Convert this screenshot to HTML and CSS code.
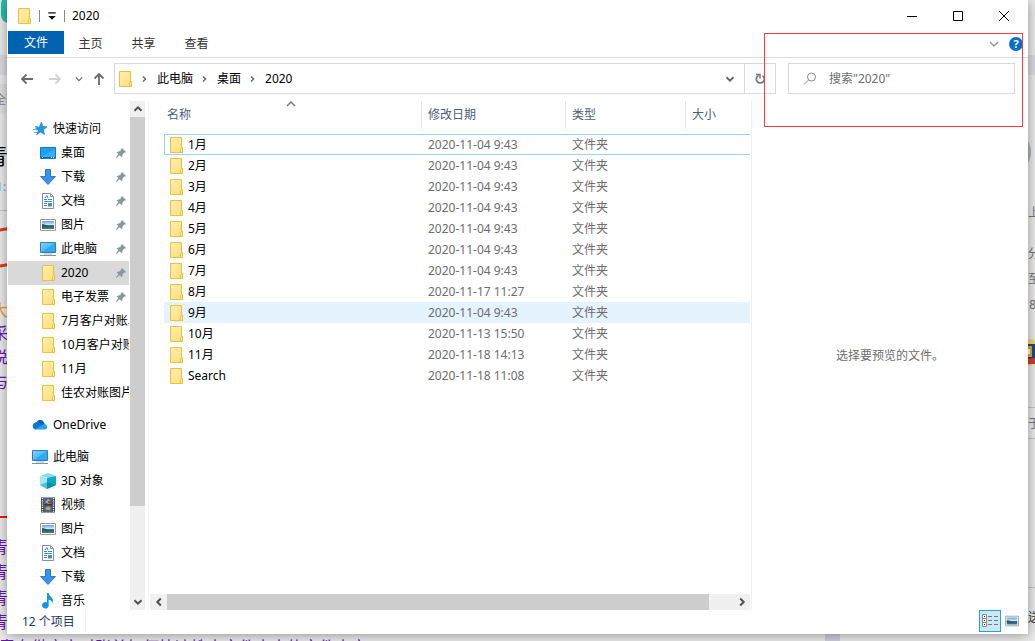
FILE: index.html
```html
<!DOCTYPE html>
<html lang="zh-CN">
<head>
<meta charset="utf-8">
<title>2020</title>
<link rel="stylesheet" href="styles.css">
</head>
<body>
<svg class="defs" aria-hidden="true">
  <defs>
    <linearGradient id="gFolder" x1="0" y1="0" x2="1" y2="1"><stop offset="0" stop-color="#ffeeb0"/><stop offset="1" stop-color="#ffdf7c"/></linearGradient>
    <linearGradient id="gScreen" x1="0" y1="0" x2="1" y2="1"><stop offset="0" stop-color="#7fd0ff"/><stop offset=".5" stop-color="#4dbcff"/><stop offset=".5" stop-color="#2ea9f8"/><stop offset="1" stop-color="#2ea9f8"/></linearGradient>
    <linearGradient id="gSky" x1="0" y1="0" x2="0" y2="1"><stop offset="0" stop-color="#5fa3e6"/><stop offset=".5" stop-color="#dceefa"/><stop offset=".55" stop-color="#44706f"/><stop offset="1" stop-color="#3c6f94"/></linearGradient>
  </defs>
  <symbol id="folder" viewBox="0 0 16 16"><path d="M2.500.5h11v10h1v5h-12z" fill="url(#gFolder)" stroke="#e8c240"/><path d="M12.500 15.500v-4l1-1h1v5z" fill="#ffe58f" stroke="#e8c240"/></symbol>
  <symbol id="star" viewBox="0 0 16 16"><path d="M9.500 1l1.200 4.500 4.300.3-3.500 3 1 4.700-3.800-2.600L5 13.500l1.200-4.300L3.500 7l4-1.300z" fill="#2598e4" stroke="#1c83cf" stroke-width=".7"/><path d="M3 5.500h3M1 8.500h4M2 11.500h3M4 14l2-1" stroke="#55b5f0" fill="none"/></symbol>
  <symbol id="desktop" viewBox="0 0 16 16"><path d="M.5 2.500h15v11H.5z" fill="#1a9fff" stroke="#1478bd"/><path d="M1 12L15 4v8z" fill="#38adff"/><path d="M1 12.500h14" stroke="#126aaa"/><path d="M2 12.500h1M11 12.500h1M13 12.500h1" stroke="#fff"/></symbol>
  <symbol id="down" viewBox="0 0 16 16"><path d="M5.500.5h5v7h5L8 15.500.5 7.500h5z" fill="#3a94e6" stroke="#2f78c2"/></symbol>
  <symbol id="doc" viewBox="0 0 16 16"><path d="M2.500.5h8l3 3v12h-11z" fill="#fff" stroke="#8a9096"/><path d="M10.500.5v3h3" fill="none" stroke="#8a9096"/><path d="M5 5l2-2.500L8 5M4 6.500h3M8 6.500h4M4 8.500h8M4 10.500h3M4 12.500h3" stroke="#2793dc" fill="none"/><path d="M8 10h4v3.500H8z" fill="#5a8d9e"/></symbol>
  <symbol id="picture" viewBox="0 0 16 16"><path d="M.5 2.500h15v11H.5z" fill="#fff" stroke="#9a9a9a"/><path d="M2 4h12v8H2z" fill="url(#gSky)"/><path d="M2 7q3 0 5 1.500t7 .5v1H2z" fill="#315a56"/></symbol>
  <symbol id="pc" viewBox="0 0 16 16"><path d="M.5 1.500h15v10H.5z" fill="url(#gScreen)" stroke="#3a7ca8"/><path d="M4 13h8" stroke="#9db4c4"/><path d="M0 14.500h16" stroke="#7b95a8"/></symbol>
  <symbol id="cloud" viewBox="0 0 16 16"><path d="M5 4.500a4 4 0 0 1 7 1l2 4H3z" fill="#0b61b8"/><path d="M3.500 12.500a3.600 3.600 0 0 1 0-7q2-1.500 4 .3l4 4z" fill="#1178d4"/><path d="M3 12.500l8-5q1.500-1 3 .2a2.600 2.600 0 0 1-1 4.800z" fill="#28a4ea"/></symbol>
  <symbol id="cube" viewBox="0 0 16 16"><path d="M0 3l8-3 8 3-7 2z" fill="#7fe0e8"/><path d="M0 3l7 2v11l-7-4z" fill="#a5e9ef"/><path d="M7 5l9-2v9l-9 4z" fill="#12a9bf"/><path d="M0 12l7-3v7z" fill="#42c6d5"/><path d="M7 9l9 3-9 4z" fill="#0792aa"/></symbol>
  <symbol id="film" viewBox="0 0 16 16"><path d="M1 .5h14v15H1z" fill="#3b3b3b"/><path d="M2.500 1v14M13.500 1v14" stroke="#fff" stroke-width="1.500" stroke-dasharray="1.200 1"/><path d="M4 1h8v6H4zM4 8.500h8V15H4z" fill="#3b67ad"/><path d="M5 5l3-3 3 2-2 3zM5 12l3-3 3 2-2 3z" fill="#d9a13a"/><path d="M8 4h3v2H8zM5 13h4v1H5z" fill="#a13f42"/></symbol>
  <symbol id="music" viewBox="0 0 16 16"><path d="M7 0h1.600q.3 2.500 2.800 4.300 2.600 2 .9 6.200 0-3-3.600-4v5.600a3.300 3.300 0 1 1-1.700-2.700z" fill="#1493e8"/></symbol>
  <symbol id="pin" viewBox="0 0 12 12"><path d="M7 1l4 4-1 .8-.7-.2-1.800 2q.3 1.600-.7 2.600L4.700 8.300 1.500 11l-.7-.6L3.500 7.200 1.600 5.200q1-1 2.700-.7l2-1.800L6.100 2z" fill="#8798a2"/></symbol>
  <symbol id="chevR" viewBox="0 0 8 8"><path d="M2 1.500L4.500 4 2 6.500" fill="none" stroke="currentColor" stroke-width="1.500"/></symbol>
  <symbol id="chevD" viewBox="0 0 10 10"><path d="M1 3l4 4 4-4" fill="none" stroke="currentColor" stroke-width="1.500"/></symbol>
  <symbol id="chevBold" viewBox="0 0 10 10"><path d="M1.500 3.200L5 6.700l3.500-3.500" fill="none" stroke="currentColor" stroke-width="2"/></symbol>
  <symbol id="arrow" viewBox="0 0 14 14"><path d="M13 7H2M6.500 2.500L2 7l4.500 4.500" fill="none" stroke="currentColor" stroke-width="1.800"/></symbol>
</svg>

<div class="backdrop" aria-hidden="true">
  <i class="band"></i><i class="tile"></i><i class="teal"></i><i class="foot"></i>
  <span class="frag grey small t100">全转</span>
  <span class="frag big t155">青</span>
  <span class="frag blue t185">1:</span>
  <i class="rule t210"></i>
  <i class="stroke t228"></i><i class="stroke t264"></i>
  <span class="frag orange t310">大</span>
  <span class="frag purple t333">采</span>
  <span class="frag purple t357">说</span>
  <span class="frag purple t382">与</span>
  <i class="redline"></i>
  <span class="frag purple t547">青</span><span class="frag purple t572">青</span><span class="frag purple t598">青</span><span class="frag purple t622">青</span>
  <i class="avatar"></i>
  <span class="side t213">上</span><span class="side t254">分</span><span class="side t279">至</span><span class="side t305">8-</span>
  <svg class="badge" viewBox="0 0 8 28"><path d="M0 2q5-3 8 1v22q-4 4-8 2z" fill="#f0d96b"/><path d="M0 6h8v15H0z" fill="#174a8b"/><path d="M0 8h5v11H0z" fill="#f0a52a"/><path d="M0 11h3v5H0z" fill="#fff"/><path d="M0 21l8-1v6H0z" fill="#d83a2e"/></svg>
  <i class="rule right t407"></i><span class="side t424">于</span><i class="rule right t438"></i><i class="rule right t587"></i>
  <span class="side dark t618">送</span>
  <span class="bottomtext">青岛供应商对账单如何快速搜索文件夹中的文件内容</span>
</div>

<main class="window">
  <header class="titlebar">
    <svg class="ico"><use href="#folder"/></svg>
    <span class="bar"></span>
    <button class="quick" aria-label="自定义快速访问工具栏"><svg viewBox="0 0 8 8"><path d="M1 1.500h6" stroke="#111"/><path d="M1 4h6L4 7z" fill="#111"/></svg></button>
    <span class="bar"></span>
    <h1>2020</h1>
    <div class="controls">
      <button aria-label="最小化"><svg viewBox="0 0 12 12"><path d="M1 6.500h10" /></svg></button>
      <button aria-label="最大化"><svg viewBox="0 0 12 12"><path d="M1.500 1.500h9v9h-9z"/></svg></button>
      <button aria-label="关闭"><svg viewBox="0 0 12 12"><path d="M1 1l10 10M11 1L1 11"/></svg></button>
    </div>
  </header>

  <nav class="ribbon">
    <button class="tab file">文件</button>
    <button class="tab">主页</button>
    <button class="tab">共享</button>
    <button class="tab">查看</button>
    <span class="grow"></span>
    <button class="expand" aria-label="展开功能区"><svg><use href="#chevD"/></svg></button>
    <button class="help" aria-label="帮助">?</button>
  </nav>

  <div class="addressrow">
    <div class="history">
      <button aria-label="返回"><svg><use href="#arrow"/></svg></button>
      <button class="off" aria-label="前进"><svg class="flip"><use href="#arrow"/></svg></button>
      <button class="recent" aria-label="最近位置"><svg><use href="#chevD"/></svg></button>
      <button class="upbtn" aria-label="上移"><svg class="turn"><use href="#arrow"/></svg></button>
    </div>
    <div class="address">
      <svg class="ico"><use href="#folder"/></svg>
      <svg class="sep"><use href="#chevR"/></svg>
      <button>此电脑</button>
      <svg class="sep"><use href="#chevR"/></svg>
      <button>桌面</button>
      <svg class="sep"><use href="#chevR"/></svg>
      <button>2020</button>
      <span class="grow"></span>
      <button class="drop" aria-label="以前的位置"><svg><use href="#chevBold"/></svg></button>
      <button class="refresh" aria-label="刷新"><svg viewBox="0 0 12 12"><path d="M8.500 2.600A4 4 0 1 1 4.500 2.400" fill="none" stroke="#777" stroke-width="1.700"/><path d="M2 1.500h4v4" fill="none" stroke="#777" stroke-width="1.500"/></svg></button>
    </div>
    <label class="search">
      <svg viewBox="0 0 14 14"><circle cx="8.500" cy="5" r="4" fill="none" stroke="#8a8490"/><path d="M5.500 8L1 12.500" stroke="#8a8490"/></svg>
      <input type="text" aria-label="搜索" placeholder="搜索&quot;2020&quot;">
    </label>
  </div>

  <div class="content">
    <aside class="sidebar">
      <div class="tree">
        <ul>
          <li class="root"><svg><use href="#star"/></svg><span>快速访问</span></li>
          <li><svg><use href="#desktop"/></svg><span>桌面</span><svg class="pin"><use href="#pin"/></svg></li>
          <li><svg><use href="#down"/></svg><span>下载</span><svg class="pin"><use href="#pin"/></svg></li>
          <li><svg><use href="#doc"/></svg><span>文档</span><svg class="pin"><use href="#pin"/></svg></li>
          <li><svg><use href="#picture"/></svg><span>图片</span><svg class="pin"><use href="#pin"/></svg></li>
          <li><svg><use href="#pc"/></svg><span>此电脑</span><svg class="pin"><use href="#pin"/></svg></li>
          <li class="current"><svg><use href="#folder"/></svg><span>2020</span><svg class="pin"><use href="#pin"/></svg></li>
          <li><svg><use href="#folder"/></svg><span>电子发票</span><svg class="pin"><use href="#pin"/></svg></li>
          <li><svg><use href="#folder"/></svg><span>7月客户对账单</span></li>
          <li><svg><use href="#folder"/></svg><span>10月客户对账单</span></li>
          <li><svg><use href="#folder"/></svg><span>11月</span></li>
          <li><svg><use href="#folder"/></svg><span>佳农对账图片</span></li>
        </ul>
        <ul>
          <li class="root"><svg><use href="#cloud"/></svg><span>OneDrive</span></li>
        </ul>
        <ul>
          <li class="root"><svg><use href="#pc"/></svg><span>此电脑</span></li>
          <li><svg><use href="#cube"/></svg><span>3D 对象</span></li>
          <li><svg><use href="#film"/></svg><span>视频</span></li>
          <li><svg><use href="#picture"/></svg><span>图片</span></li>
          <li><svg><use href="#doc"/></svg><span>文档</span></li>
          <li><svg><use href="#down"/></svg><span>下载</span></li>
          <li><svg><use href="#music"/></svg><span>音乐</span></li>
        </ul>
      </div>
      <div class="scroll vertical">
        <button aria-label="向上滚动"><svg class="half"><use href="#chevBold"/></svg></button>
        <div class="thumb"></div><div class="rest"></div>
        <button aria-label="向下滚动"><svg><use href="#chevBold"/></svg></button>
      </div>
    </aside>

    <section class="files">
      <div class="listing">
        <table>
          <colgroup><col><col class="c-date"><col class="c-type"><col class="c-size"></colgroup>
          <thead><tr>
            <th><div class="head">名称<svg class="sort"><use href="#chevD"/></svg></div></th>
            <th><div class="head">修改日期</div></th>
            <th><div class="head">类型</div></th>
            <th><div class="head last">大小</div></th>
          </tr></thead>
          <tbody>
            <tr class="focused"><td><div class="name"><svg><use href="#folder"/></svg>1月</div></td><td>2020-11-04 9:43</td><td>文件夹</td><td></td></tr>
            <tr><td><div class="name"><svg><use href="#folder"/></svg>2月</div></td><td>2020-11-04 9:43</td><td>文件夹</td><td></td></tr>
            <tr><td><div class="name"><svg><use href="#folder"/></svg>3月</div></td><td>2020-11-04 9:43</td><td>文件夹</td><td></td></tr>
            <tr><td><div class="name"><svg><use href="#folder"/></svg>4月</div></td><td>2020-11-04 9:43</td><td>文件夹</td><td></td></tr>
            <tr><td><div class="name"><svg><use href="#folder"/></svg>5月</div></td><td>2020-11-04 9:43</td><td>文件夹</td><td></td></tr>
            <tr><td><div class="name"><svg><use href="#folder"/></svg>6月</div></td><td>2020-11-04 9:43</td><td>文件夹</td><td></td></tr>
            <tr><td><div class="name"><svg><use href="#folder"/></svg>7月</div></td><td>2020-11-04 9:43</td><td>文件夹</td><td></td></tr>
            <tr><td><div class="name"><svg><use href="#folder"/></svg>8月</div></td><td>2020-11-17 11:27</td><td>文件夹</td><td></td></tr>
            <tr class="hover"><td><div class="name"><svg><use href="#folder"/></svg>9月</div></td><td>2020-11-04 9:43</td><td>文件夹</td><td></td></tr>
            <tr><td><div class="name"><svg><use href="#folder"/></svg>10月</div></td><td>2020-11-13 15:50</td><td>文件夹</td><td></td></tr>
            <tr><td><div class="name"><svg><use href="#folder"/></svg>11月</div></td><td>2020-11-18 14:13</td><td>文件夹</td><td></td></tr>
            <tr><td><div class="name"><svg><use href="#folder"/></svg>Search</div></td><td>2020-11-18 11:08</td><td>文件夹</td><td></td></tr>
          </tbody>
        </table>
      </div>
      <div class="scroll horizontal">
        <button aria-label="向左滚动"><svg class="turnleft"><use href="#chevBold"/></svg></button>
        <div class="thumb"></div><div class="rest"></div>
        <button aria-label="向右滚动"><svg class="turnright"><use href="#chevBold"/></svg></button>
      </div>
    </section>

    <section class="preview"><p>选择要预览的文件。</p></section>
  </div>

  <footer class="status">
    <span class="count">12 个项目</span>
    <span class="grow"></span>
    <button class="view on" aria-label="详细信息"><svg viewBox="0 0 18 14"><path d="M1.500.5h4v12h-4zM1.500 4.500h4M1.500 8.500h4" fill="#fff" stroke="#8c8c8c"/><path d="M3 2.500h1M3 6.500h1M3 10.500h1" stroke="#333"/><path d="M7 2.500h4M13 2.500h4M7 6.500h4M13 6.500h4M7 10.500h4M13 10.500h4" stroke="#777"/></svg></button>
    <button class="view" aria-label="大缩略图"><svg class="thumbs"><use href="#picture"/></svg></button>
  </footer>
</main>
<div class="marker" aria-hidden="true"></div>
</body>
</html>
```
FILE: styles.css
```css
* { box-sizing: border-box; }
body {
  margin: 0;
  height: 100vh;
  overflow: hidden;
  font: 12px/16px "Noto Sans", "Noto Sans CJK SC", sans-serif;
  color: #000;
  background: #ececec;
}
button { font: inherit; color: inherit; border: 0; padding: 0; background: none; display: flex; align-items: center; justify-content: center; }
svg { display: block; flex: none; }
.defs { position: absolute; width: 0; height: 0; }
.grow { flex: 1; }
.ico { width: 16px; height: 16px; }

/* page behind the window */
.backdrop { position: absolute; inset: 0; overflow: hidden; }
.backdrop > * { position: absolute; }
.band { left: 0; right: 0; top: 55px; height: 20px; background: #dcdce3; }
.tile { left: 0; top: 84px; width: 20px; height: 30px; background: #e2e2e2; }
.teal { left: 1px; top: -4px; width: 40px; height: 27px; border-radius: 8px; background: #2cbcae; }
.foot { left: 825px; bottom: 0; width: 15px; height: 10px; background: #d0d1d9; }
.frag { left: -8px; font-size: 16px; line-height: 20px; margin-top: -10px; white-space: nowrap; }
.small { left: -6px; font-size: 12px; }
.big { left: -14px; font-size: 22px; }
.grey { color: #888; }
.blue { color: #7ba7dd; left: -4px; font-size: 12px; }
.orange { color: #f39a1e; }
.purple { color: #6a11b5; }
.rule { left: 0; width: 8px; height: 1px; background: #c4c4c4; }
.right { left: auto; right: 0; }
.stroke { left: -4px; width: 14px; height: 3px; background: #e03d18; transform: rotate(-10deg); }
.redline { left: 0; top: 516px; width: 8px; height: 2px; background: #f11; }
.avatar { right: 4px; top: 130px; width: 44px; height: 44px; border-radius: 50%; background: #aab4bf; }
.side { right: -5px; font-size: 12px; line-height: 16px; margin-top: -8px; color: #777; white-space: nowrap; }
.dark { color: #333; }
.badge { right: 0; top: 338px; width: 8px; height: 28px; }
.bottomtext { left: -1px; top: 637px; font-size: 16px; line-height: 20px; color: #6a11b5; white-space: nowrap; }
.t100 { top: 100px; } .t155 { top: 155px; } .t185 { top: 187px; } .t210 { top: 210px; }
.t228 { top: 228px; } .t264 { top: 264px; } .t310 { top: 310px; } .t333 { top: 333px; }
.t357 { top: 357px; } .t382 { top: 382px; } .t547 { top: 547px; } .t572 { top: 572px; }
.t598 { top: 598px; } .t622 { top: 622px; } .t213 { top: 213px; } .t254 { top: 254px; }
.t279 { top: 279px; } .t305 { top: 305px; } .t407 { top: 407px; } .t424 { top: 424px; }
.t438 { top: 438px; } .t587 { top: 587px; } .t618 { top: 618px; }

/* window */
.window {
  position: relative;
  display: flex;
  flex-direction: column;
  height: calc(100vh - 7px);
  margin: 0 7px;
  background: #fff;
  box-shadow: 0 1px 12px rgba(0, 0, 0, .4);
}
.titlebar { display: flex; align-items: center; height: 31px; padding: 0 1px 0 9px; }
.bar { width: 1px; height: 12px; background: #8a8a8a; margin: 0 7px; }
.quick svg { width: 10px; height: 10px; }
.titlebar h1 { margin: 0; font-size: 12px; font-weight: 400; }
.controls { display: flex; margin-left: auto; }
.controls button { width: 46px; height: 30px; }
.controls svg { width: 12px; height: 12px; fill: none; stroke: #000; }

.ribbon { display: flex; height: 27px; border-bottom: 1px solid #dadbdc; color: #333; padding: 0 5px 0 1px; align-items: flex-start; }
.tab { width: 53px; height: 25px; }
.file { width: 56px; height: 23px; color: #fff; background: #0063b1; }
.expand { width: 30px; height: 26px; color: #9a9a9a; }
.expand svg { width: 10px; height: 10px; }
.help { width: 14px; height: 14px; margin-top: 6px; border-radius: 50%; background: #0a6fca; color: #fff; font-size: 11px; font-weight: 700; }

.addressrow { display: flex; padding: 5px 13px 6px 0; }
.history { display: flex; width: 107px; padding-left: 10px; color: #6b6b6b; }
.history button { width: 20px; }
.history svg { width: 14px; height: 14px; }
.history .off { width: 40px; color: #d2d2d2; }
.history .recent { width: 10px; }
.history .recent svg { width: 8px; height: 8px; }
.history .upbtn { width: 32px; }
.flip { transform: scaleX(-1); }
.turn { transform: rotate(90deg); }
.address { flex: 1; display: flex; align-items: center; height: 31px; border: 1px solid #d9d9d9; padding-left: 2px; }
.address .sep { width: 8px; height: 8px; margin: 0 8px; color: #6b6b6b; }
.address .drop { width: 28px; color: #666; }
.address .drop svg { width: 10px; height: 10px; }
.address .refresh { width: 31px; height: 29px; border-left: 1px solid #d9d9d9; }
.refresh svg { width: 12px; height: 12px; }
.search { width: 227px; height: 31px; margin-left: 12px; display: flex; align-items: center; border: 1px solid #d9d9d9; padding-left: 14px; }
.search svg { width: 14px; height: 14px; }
.search input { flex: 1; min-width: 0; border: 0; outline: 0; padding: 0 0 0 12px; font: inherit; background: none; }
.search input::placeholder { color: #6d6d6d; opacity: 1; }

.content { flex: 1; min-height: 0; display: flex; padding-top: 1px; }
.sidebar { display: flex; width: 142px; border-right: 1px solid #f5f5f5; }
.tree { width: 123px; padding: 16px 1px 0; overflow: hidden; flex: none; }
.tree ul { list-style: none; margin: 0 0 8px; padding: 0; }
.tree li { display: flex; align-items: center; height: 24px; padding-left: 32px; white-space: nowrap; overflow: hidden; }
.tree li.root { padding-left: 24px; }
.tree li svg { width: 16px; height: 16px; margin-right: 5px; }
.tree li .pin { width: 12px; height: 12px; margin: 0 2px 0 auto; }
.tree .current { background: #d9d9d9; }

.scroll { display: flex; background: #f0f0f0; color: #505050; flex: none; }
.scroll svg { width: 10px; height: 10px; }
.scroll .thumb { background: #cdcdcd; }
.vertical { flex-direction: column; width: 15px; }
.vertical button { height: 16px; }
.vertical .thumb { flex: 389; }
.vertical .rest { flex: 88; }
.horizontal { height: 16px; margin: 0 1px; }
.horizontal button { width: 17px; }
.horizontal .thumb { flex: 542; }
.horizontal .rest { flex: 24; }
.half { transform: rotate(180deg); }
.turnleft { transform: rotate(90deg); }
.turnright { transform: rotate(-90deg); }

.files { flex: 1; min-width: 0; display: flex; flex-direction: column; border-right: 1px solid #f0f0f0; }
.listing { flex: 1; min-height: 0; padding: 0 1px 0 15px; overflow: hidden; }
table { width: 100%; border-collapse: separate; border-spacing: 0; table-layout: fixed; }
.c-date { width: 144px; }
.c-type { width: 120px; }
.c-size { width: 64px; }
th { padding: 0 0 5px; font-weight: 400; text-align: left; color: #4c607a; }
.head { position: relative; height: 28px; padding: 6px 0 0 6px; border-right: 1px solid #e5e5e5; }
th:first-child .head { padding-left: 3px; }
.head.last { border-right: 0; }
.sort { position: absolute; top: -2px; left: calc(50% - 7px); width: 10px; height: 10px; transform: rotate(180deg); color: #777; }
td { height: 21px; padding: 0 0 0 6px; line-height: 19px; color: #6d6d6d; border: 0 solid #99d1ff; }
td:first-child { padding-left: 4px; color: #000; }
.name { display: flex; align-items: center; gap: 4px; }
.name svg { width: 16px; height: 16px; }
.focused td { border-width: 1px 0; }
.focused td:first-child { border-left-width: 1px; padding-left: 3px; }
.hover td { background: #e5f3ff; }

.preview { width: 276px; display: flex; align-items: center; justify-content: center; color: #6d6d6d; }
.preview p { margin: 0; }

.status { display: flex; height: 24px; padding: 0 5px 2px 15px; color: #1e395b; }
.count { line-height: 24px; padding-right: 10px; border-right: 1px solid #f0f0f0; }
.view { width: 22px; height: 22px; border: 1px solid transparent; }
.view.on { background: #cbe8f6; border-color: #26a0da; }
.view svg { width: 18px; height: 14px; }
.view .thumbs { width: 14px; height: 14px; }

/* highlight rectangle */
.marker { position: absolute; top: 33px; right: 12px; width: 259px; height: 94px; border: 1px solid #f83b3b; }
```
